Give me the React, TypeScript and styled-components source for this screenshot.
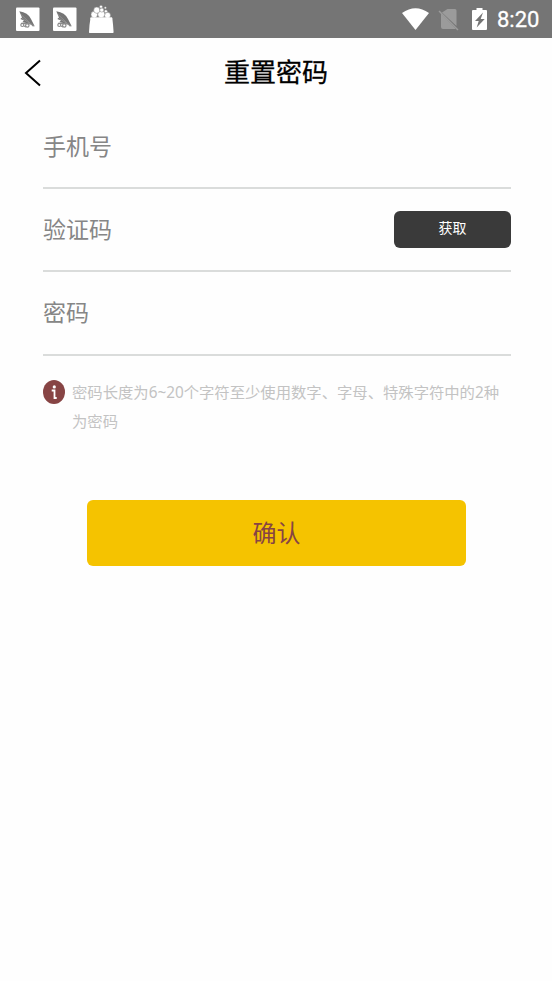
import React from "react";
import styled, { createGlobalStyle } from "styled-components";

const GlobalStyle = createGlobalStyle`
  * { box-sizing: border-box; }
  body { margin: 0; background: #fefefe; font-family: "Noto Sans", "Noto Sans CJK SC", sans-serif; }
`;

const Screen = styled.main`
  display: flex;
  flex-direction: column;
  width: 552px;
  height: 981px;
  overflow: hidden;
  background: #fefefe;
`;

const StatusBar = styled.div`
  display: flex;
  justify-content: space-between;
  height: 38px;
  flex: none;
  background: #757575;
`;

const StatusIcons = styled.svg`
  display: block;
  flex: none;
`;

const StatusRight = styled.div`
  display: flex;
  width: 154px;
`;

const Clock = styled.time`
  width: 56px;
  padding-left: 1px;
  color: #fff;
  font: 400 22px/40px Roboto, sans-serif;
  -webkit-text-stroke: 0.3px #fff;
  white-space: nowrap;
`;

const Header = styled.header`
  display: grid;
  grid-template-columns: 66px 1fr 66px;
  height: 68px;
  flex: none;
`;

const BackButton = styled.button`
  display: block;
  padding: 0;
  border: 0;
  background: none;
`;

const Title = styled.h1`
  margin: 0;
  color: #000;
  font-size: 26px;
  font-weight: 400;
  line-height: 68px;
  text-align: center;
  -webkit-text-stroke: 0.3px #000;
`;

const Form = styled.form`
  display: flex;
  flex-direction: column;
  padding: 0 41px 0 43px;
`;

const Field = styled.div<{ $height: number }>`
  display: flex;
  align-items: center;
  justify-content: space-between;
  height: ${(p) => p.$height}px;
  border-bottom: 2px solid #dadcdb;
`;

const FieldLabel = styled.label`
  padding-bottom: 2px;
  color: #868686;
  font-size: 23px;
  line-height: 34px;
`;

const CodeButton = styled.button`
  width: 117px;
  height: 37px;
  padding: 0 0 3px;
  border: 0;
  border-radius: 6px;
  background: #3a3a3a;
  color: #fff;
  font: 14px/34px "Noto Sans", "Noto Sans CJK SC", sans-serif;
`;

const Hint = styled.div`
  display: flex;
  gap: 7px;
  margin-top: 21px;
`;

const HintIcon = styled.svg`
  flex: none;
  margin-top: 3px;
`;

const HintText = styled.p`
  margin: 0;
  padding-top: 1px;
  color: #c3c3c3;
  font-size: 15.34px;
  line-height: 29px;
  white-space: nowrap;
`;

const ConfirmButton = styled.button`
  width: 379px;
  height: 66px;
  margin: 64px 0 0 44px;
  padding: 0;
  border: 0;
  border-radius: 6px;
  background: #f5c300;
  color: #874444;
  font: 24px/66px "Noto Sans", "Noto Sans CJK SC", sans-serif;
`;

function Notifications() {
  return (
    <StatusIcons width="130" height="38" viewBox="0 0 130 38">
      {[0, 37].map((x) => (
        <g key={x} transform={`translate(${x} 0)`}>
          <rect x="16" y="7.5" width="23.5" height="23.5" rx="1" fill="#fff" />
          <path d="M19.3 11.3Q28 12.500 31 19L34.800 26.500 29 23.500 22.200 22.300 24 20.500 20.300 19 22 17.500Z" fill="#757575" />
          <path d="M21 14.500l9 8.500M22 18.300l7 4.500" stroke="#a5a5a5" strokeWidth=".6" />
          <g fill="none" stroke="#8b8b8b" strokeWidth="1.2">
            <circle cx="22.3" cy="25" r="1.500" />
            <circle cx="27.300" cy="25.400" r="1.700" />
            <path d="M21 23.300l10 .5 2.500 2.500M24 26l2 1" />
          </g>
        </g>
      ))}
      <g fill="#fff">
        <path d="M90.5 18h21.8q.8 6 1.3 14.3 0 .7-.8.7H89.7q-.8 0-.7-.7.4-8.3 1.5-14.3Z" />
        <g stroke="#858585" strokeWidth=".5">
          <circle cx="94.300" cy="14.600" r="3.300" />
          <circle cx="107.500" cy="15.300" r="3" />
          <circle cx="101.300" cy="14.300" r="3.500" />
          <circle cx="96.800" cy="10.200" r="3.100" />
          <circle cx="101.800" cy="10" r="2.100" />
          <circle cx="105.900" cy="11.300" r="1.500" />
          <circle cx="101" cy="6.700" r="1.500" />
          <circle cx="105.300" cy="7.800" r="1.100" />
        </g>
        <rect x="90.500" y="17.300" width="21.600" height="2" />
      </g>
    </StatusIcons>
  );
}

function SystemIcons() {
  return (
    <StatusIcons width="98" height="38" viewBox="398 0 98 38">
      <path d="M402 13Q415.500 3.500 429 13L415.500 30Z" fill="#fff" />
      <path d="M447.500 9H455q1.500 0 1.500 1.500V26L442 12.500ZM441 13.500L455.500 28.500Q455 29 454 29H443q-2 0-2-2Z" fill="#9b9b9b" />
      <path d="M439 11l19 19" stroke="#9b9b9b" strokeWidth="1.500" />
      <path d="M476.500 8h6v2h3.500q1 0 1 1v18q0 1-1 1h-13q-1 0-1-1V11q0-1 1-1h3.500Z" fill="#fff" />
      <path d="M483 12.500l-8 8.500h3.700l-2 6.500 8-8.500h-4Z" fill="#757575" />
    </StatusIcons>
  );
}

export default function App() {
  return (
    <>
      <GlobalStyle />
      <Screen>
        <StatusBar>
          <Notifications />
          <StatusRight>
            <SystemIcons />
            <Clock>8:20</Clock>
          </StatusRight>
        </StatusBar>
        <Header>
          <BackButton type="button" aria-label="返回">
            <svg width="66" height="68" viewBox="0 38 66 68" display="block">
              <path d="M40 60.500L26 73l14 12.500" fill="none" stroke="#000" strokeWidth="2" />
            </svg>
          </BackButton>
          <Title>重置密码</Title>
        </Header>
        <Form>
          <Field $height={83}>
            <FieldLabel>手机号</FieldLabel>
          </Field>
          <Field $height={83}>
            <FieldLabel>验证码</FieldLabel>
            <CodeButton type="button">获取</CodeButton>
          </Field>
          <Field $height={84}>
            <FieldLabel>密码</FieldLabel>
          </Field>
          <Hint>
            <HintIcon width="22" height="24" viewBox="0 0 22 24">
              <ellipse cx="11" cy="12" rx="11" ry="12" fill="#874444" />
              <circle cx="11.300" cy="6.900" r="1.600" fill="#fff" />
              <path d="M8.700 10.500h2.800v7.500h2.200" fill="none" stroke="#fff" strokeWidth="1.800" />
            </HintIcon>
            <HintText>
              密码长度为6~20个字符至少使用数字、字母、特殊字符中的2种
              <br />
              为密码
            </HintText>
          </Hint>
          <ConfirmButton type="button">确认</ConfirmButton>
        </Form>
      </Screen>
    </>
  );
}
